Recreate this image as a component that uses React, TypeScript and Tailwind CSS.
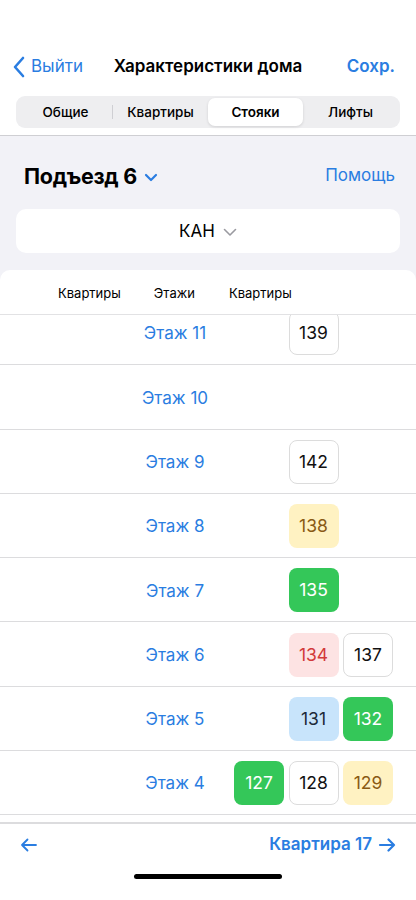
import React from "react";

type Kind = "white" | "green" | "yellow" | "pink" | "blue";
type Apt = { n: number; k: Kind; col: 1 | 2 | 3 };

const rows: { floor: number; apts: Apt[] }[] = [
  { floor: 11, apts: [{ n: 139, k: "white", col: 2 }] },
  { floor: 10, apts: [] },
  { floor: 9, apts: [{ n: 142, k: "white", col: 2 }] },
  { floor: 8, apts: [{ n: 138, k: "yellow", col: 2 }] },
  { floor: 7, apts: [{ n: 135, k: "green", col: 2 }] },
  { floor: 6, apts: [{ n: 134, k: "pink", col: 2 }, { n: 137, k: "white", col: 3 }] },
  { floor: 5, apts: [{ n: 131, k: "blue", col: 2 }, { n: 132, k: "green", col: 3 }] },
  {
    floor: 4,
    apts: [
      { n: 127, k: "green", col: 1 },
      { n: 128, k: "white", col: 2 },
      { n: 129, k: "yellow", col: 3 },
    ],
  },
];

const kindCls: Record<Kind, string> = {
  white: "bg-white border border-[#dcdcdc] text-[#111]",
  green: "bg-[#34c759] text-white",
  yellow: "bg-[#fff2c2] text-[#8a5a14]",
  pink: "bg-[#fde3e3] text-[#d23a3a]",
  blue: "bg-[#c8e4fb] text-[#1d2a38]",
};

const colCls = { 1: "col-start-1", 2: "col-start-2", 3: "col-start-3" };

export default function App() {
  return (
    <div
      className="w-[416px] h-[900px] bg-white relative overflow-hidden flex flex-col"
      style={{ fontFamily: "Inter, 'Noto Sans', sans-serif" }}
    >
      {/* Top / nav */}
      <div className="h-[40px] shrink-0" />
      <div className="h-[56px] shrink-0 flex items-center justify-between px-[13px] relative pb-[2px]">
        <div className="flex items-center gap-[6px] text-[#2a7de1] text-[17px]">
          <svg width="12" height="22" viewBox="0 0 12 22" fill="none">
            <path d="M10 2L2 11L10 20" stroke="#2a7de1" strokeWidth="2.6" strokeLinecap="round" strokeLinejoin="round" />
          </svg>
          <span>Выйти</span>
        </div>
        <div className="absolute left-0 right-0 text-center text-[17px] font-semibold text-black pointer-events-none">
          Характеристики дома
        </div>
        <div className="text-[17px] font-semibold text-[#2a7de1] pr-[8px]">Сохр.</div>
      </div>
      <div className="px-4 shrink-0">
        <div className="h-[32px] bg-[#eeeef0] rounded-[9px] grid grid-cols-4 p-[2px] items-stretch">
          <div className="flex items-center justify-center text-[13.5px] font-medium text-black relative">
            Общие
            <div className="absolute right-0 top-[7px] bottom-[7px] w-px bg-[#cfcfd3]" />
          </div>
          <div className="flex items-center justify-center text-[13.5px] font-medium text-black">Квартиры</div>
          <div className="flex items-center justify-center text-[13.5px] font-semibold text-black bg-white rounded-[7px] shadow-[0_1px_3px_rgba(0,0,0,0.12)]">
            Стояки
          </div>
          <div className="flex items-center justify-center text-[13.5px] font-medium text-black">Лифты</div>
        </div>
      </div>
      <div className="h-[8px] shrink-0 border-b border-[#cfcfd3]" />

      {/* Gray area */}
      <div className="bg-[#f2f2f7] shrink-0 flex flex-col">
        <div className="h-[73px] flex items-center justify-between pl-6 pr-[21px] pt-[8px] pb-[1px]">
          <div className="flex items-center gap-[7px]">
            <span className="text-[21.5px] font-bold text-black tracking-[-0.3px]">Подъезд 6</span>
            <svg width="14" height="9" viewBox="0 0 14 9" fill="none" className="mt-[2px]">
              <path d="M2 2L7 7L12 2" stroke="#2a7de1" strokeWidth="2.2" strokeLinecap="round" strokeLinejoin="round" />
            </svg>
          </div>
          <span className="text-[17px] text-[#2a7de1]">Помощь</span>
        </div>
        <div className="px-4">
          <div className="h-[44px] bg-white rounded-[10px] flex items-center justify-center gap-[8px] pt-[2px]">
            <span className="text-[17px] text-black">КАН</span>
            <svg width="14" height="9" viewBox="0 0 14 9" fill="none">
              <path d="M1.5 1.5L7 7L12.5 1.5" stroke="#9a9aa0" strokeWidth="1.6" strokeLinecap="round" strokeLinejoin="round" />
            </svg>
          </div>
        </div>
        <div className="h-[17px]" />
      </div>

      {/* Panel */}
      <div className="bg-[#f2f2f7] flex-1 flex flex-col min-h-0">
        <div className="bg-white rounded-t-[10px] flex-1 flex flex-col min-h-0">
          <div className="h-[45px] shrink-0 flex items-center border-b border-[#e2e2e4] text-[13px] text-black pt-[3px]">
            <span className="ml-[58px]">Квартиры</span>
            <span className="ml-[33px]">Этажи</span>
            <span className="ml-[34px]">Квартиры</span>
          </div>
          <div className="h-[507px] shrink-0 overflow-hidden">
            <div className="mt-[-14px]">
              {rows.map((r) => (
                <div key={r.floor} className="h-[64.3px] flex items-center border-b border-[#dcdcde]">
                  <div className="ml-[120px] w-[110px] text-center text-[17px] text-[#2a7de1] pt-[3px]">
                    Этаж {r.floor}
                  </div>
                  <div className="ml-[4px] grid grid-cols-[50px_50px_50px] gap-[4.5px] pt-[1px]">
                    {r.apts.map((a) => (
                      <div
                        key={a.n}
                        className={`${colCls[a.col]} h-[44px] rounded-[8px] flex items-center justify-center text-[17.5px] ${kindCls[a.k]}`}
                      >
                        {a.n}
                      </div>
                    ))}
                  </div>
                </div>
              ))}
            </div>
          </div>
          {/* Toolbar */}
          <div className="shrink-0 border-t-2 border-[#dcdcde] h-[43px] flex items-center justify-between pl-[20px] pr-[20px]">
            <svg width="18" height="14" viewBox="0 0 18 14" fill="none">
              <path d="M16 7H2M7.5 1.5L2 7L7.5 12.5" stroke="#2a7de1" strokeWidth="1.8" strokeLinecap="round" strokeLinejoin="round" />
            </svg>
            <div className="flex items-center gap-[6px] text-[17px] font-semibold text-[#2a7de1]">
              <span>Квартира 17</span>
              <svg width="18" height="14" viewBox="0 0 18 14" fill="none">
                <path d="M2 7H16M10.5 1.5L16 7L10.5 12.5" stroke="#2a7de1" strokeWidth="2.2" strokeLinecap="round" strokeLinejoin="round" />
              </svg>
            </div>
          </div>
          <div className="flex-1 flex items-start justify-center pt-[9px]">
            <div className="w-[148px] h-[5px] rounded-full bg-black" />
          </div>
        </div>
      </div>
    </div>
  );
}
